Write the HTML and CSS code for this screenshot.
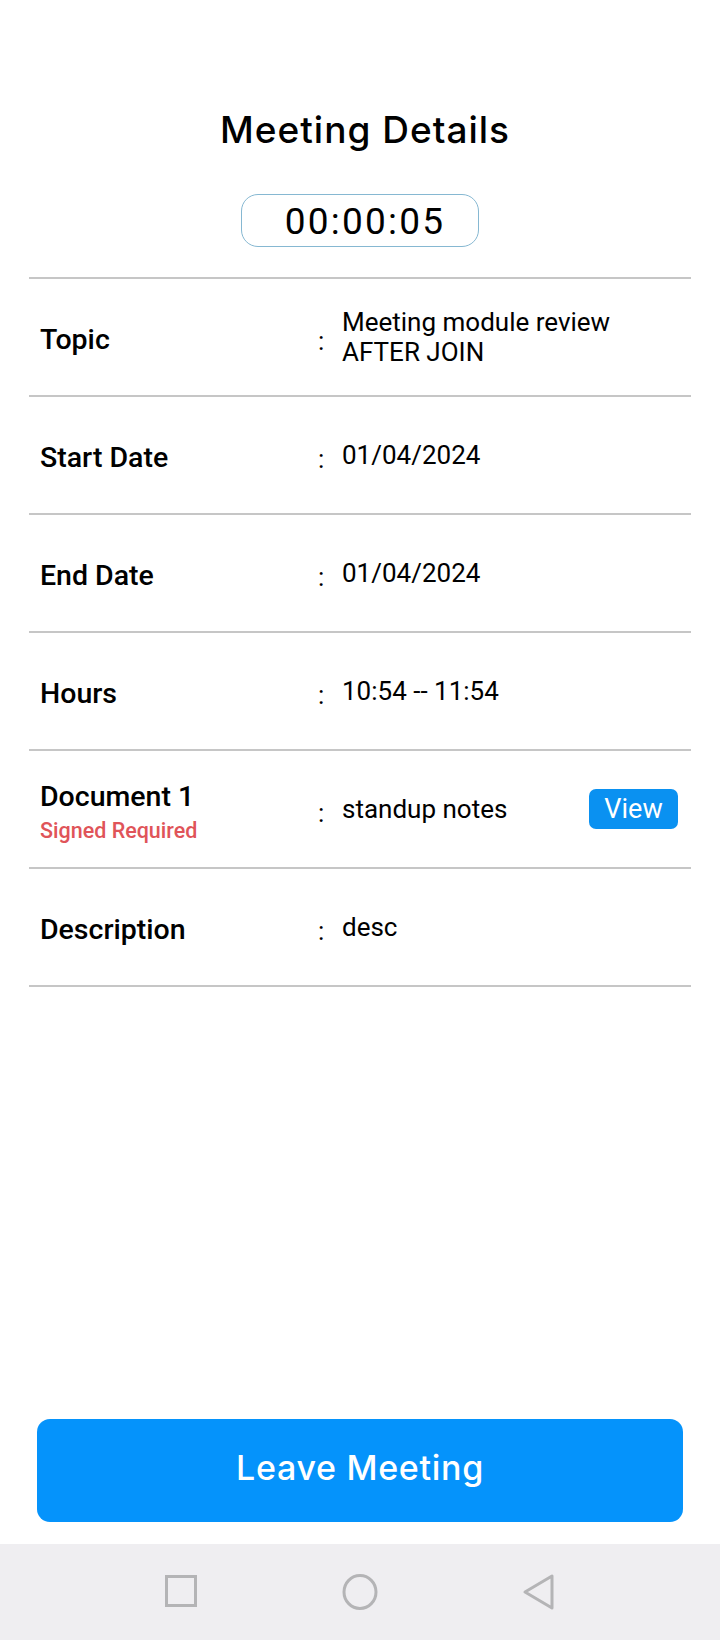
FILE: index.html
```html
<!DOCTYPE html>
<html lang="en">
<head>
    <meta charset="UTF-8">
    <meta name="viewport" content="width=device-width, initial-scale=1.0">
    <title>Meeting Details</title>
    <link rel="stylesheet" href="styles.css">
</head>
<body>
    <div class="page">
        <h1 class="title">Meeting Details</h1>
        <div class="timer">00:00:05</div>

        <div class="details">
            <div class="row">
                <div class="label">Topic</div>
                <div class="colon">:</div>
                <div class="value">Meeting module review<br>AFTER JOIN</div>
            </div>
            <div class="row">
                <div class="label">Start Date</div>
                <div class="colon">:</div>
                <div class="value">01/04/2024</div>
            </div>
            <div class="row">
                <div class="label">End Date</div>
                <div class="colon">:</div>
                <div class="value">01/04/2024</div>
            </div>
            <div class="row">
                <div class="label">Hours</div>
                <div class="colon">:</div>
                <div class="value">10:54 -- 11:54</div>
            </div>
            <div class="row">
                <div class="label">Document 1<span class="required">Signed Required</span></div>
                <div class="colon">:</div>
                <div class="value">standup notes</div>
                <button class="view">View</button>
            </div>
            <div class="row">
                <div class="label">Description</div>
                <div class="colon">:</div>
                <div class="value">desc</div>
            </div>
        </div>

        <div class="spacer"></div>

        <button class="leave">Leave Meeting</button>

        <div class="navbar">
            <svg width="36" height="36" viewBox="0 0 36 36"><rect x="3.5" y="2.5" width="29" height="29" fill="none" stroke="#b4b4b6" stroke-width="3"/></svg>
            <svg width="38" height="38" viewBox="0 0 38 38"><ellipse cx="19" cy="19" rx="16" ry="16.5" fill="none" stroke="#b4b4b6" stroke-width="3"/></svg>
            <svg width="36" height="38" viewBox="0 0 36 38"><path d="M31 3 L31 35 L4 19 Z" fill="none" stroke="#b4b4b6" stroke-width="3" stroke-linejoin="round"/></svg>
        </div>
    </div>
</body>
</html>
```

FILE: styles.css
```css
body {
    margin: 0;
    background-color: #ffffff;
    font-family: Roboto, "Liberation Sans", sans-serif;
    color: #000000;
}
.page {
    display: flex;
    flex-direction: column;
    align-items: center;
    width: 720px;
    height: 1640px;
}
.title {
    margin: 106px 0 0 0;
    padding-left: 10px;
    font-family: Inter, "Noto Sans", sans-serif;
    font-weight: 500;
    font-size: 37px;
    line-height: 48px;
    letter-spacing: 1px;
}
.timer {
    margin-top: 40px;
    width: 226px;
    height: 50px;
    border: 1px solid #86b8d2;
    border-radius: 17px;
    display: flex;
    justify-content: center;
    align-items: center;
    font-size: 37px;
    letter-spacing: 2.2px;
    padding: 1px 0 0 10px;
    box-sizing: content-box;
}
.details {
    margin-top: 30px;
    width: 662px;
    border-top: 2px solid #c6c6c6;
}
.row {
    display: grid;
    grid-template-columns: 278px 24px 1fr auto;
    align-items: center;
    height: 112px;
    padding: 4px 13px 0 11px;
    border-bottom: 2px solid #c6c6c6;
}
.label {
    font-weight: 500;
    font-size: 28.5px;
    display: flex;
    flex-direction: column;
}
.required {
    margin-top: 5px;
    font-size: 21.5px;
    color: #e05459;
}
.colon {
    font-size: 26px;
    padding-top: 3px;
}
.value {
    font-size: 26px;
    line-height: 30px;
    margin-bottom: 4px;
}
.view {
    width: 89px;
    height: 40px;
    border: none;
    border-radius: 7px;
    background-color: #0a91f1;
    color: #ffffff;
    font-family: Roboto, sans-serif;
    font-size: 27px;
    padding: 0;
    margin-bottom: 4px;
}
.spacer {
    flex: 1;
}
.leave {
    width: 646px;
    height: 103px;
    border: none;
    border-radius: 13px;
    background-color: #0593fb;
    color: #ffffff;
    font-family: Inter, "Noto Sans", sans-serif;
    font-weight: 500;
    font-size: 34px;
    letter-spacing: 0.7px;
    padding: 0 0 6px 0;
    margin-bottom: 22px;
}
.navbar {
    width: 100%;
    height: 96px;
    background-color: #efeef1;
    display: flex;
    justify-content: center;
    align-items: center;
    gap: 142px;
}
```
